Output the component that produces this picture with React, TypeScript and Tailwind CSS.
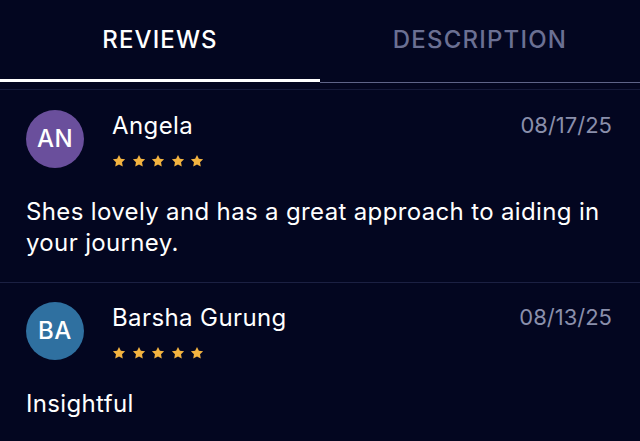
const REVIEWS = [
  {
    initials: 'AN',
    name: 'Angela',
    date: '08/17/25',
    color: 'bg-[#6a4f9c]',
    text: 'Shes lovely and has a great approach to aiding in your journey.',
  },
  {
    initials: 'BA',
    name: 'Barsha Gurung',
    date: '08/13/25',
    color: 'bg-[#2f70a0]',
    text: 'Insightful',
  },
]

function Star() {
  return (
    <svg width="14" height="14" viewBox="0 0 24 24" className="fill-[#f3b340]">
      <path d="M12 1.5l3.2 6.7 7.3 1-5.3 5.1 1.3 7.3L12 18.1l-6.5 3.5 1.3-7.3-5.3-5.1 7.3-1z" />
    </svg>
  )
}

function ReviewItem({ review, last }: { review: (typeof REVIEWS)[number]; last?: boolean }) {
  return (
    <div className={last ? 'pl-[26px] pr-[24px] pt-[19px]' : 'pl-[26px] pr-[24px] pt-[20px] pb-[24px] border-b border-[#1b2042]'}>
      <div className="flex items-start">
        {/* Avatar */}
        <div
          className={`w-[58px] h-[58px] rounded-full ${review.color} flex items-center justify-center shrink-0`}
        >
          <span className="text-white text-[24px] font-medium tracking-[0.5px]">{review.initials}</span>
        </div>

        {/* Name + rating */}
        <div className="ml-[28px] flex-1">
          <p className="text-white text-[24px] tracking-[0.4px] leading-[32px]">{review.name}</p>
          <div className="flex gap-[5.5px] mt-[12px]">
            {[0, 1, 2, 3, 4].map(i => (
              <Star key={i} />
            ))}
          </div>
        </div>

        <p className="text-[#8a8fab] text-[22px] leading-[32px] -mt-[1px] mr-[4px]">{review.date}</p>
      </div>

      <p className="text-white text-[24px] tracking-[0.35px] leading-[31px] mt-[28px]">{review.text}</p>
    </div>
  )
}

export default function App() {
  return (
    <div className="w-[640px] h-[441px] overflow-hidden bg-[#030620] font-['Inter',sans-serif]">
      {/* Tabs */}
      <div className="flex h-[79px]">
        <div className="w-1/2 flex items-center justify-center">
          <span className="text-white text-[24px] font-medium tracking-[1.1px]">REVIEWS</span>
        </div>
        <div className="w-1/2 flex items-center justify-center">
          <span className="text-[#6b7093] text-[24px] font-medium tracking-[1.2px]">DESCRIPTION</span>
        </div>
      </div>
      <div className="flex h-[4px]">
        <div className="w-1/2 h-[3px] bg-white" />
        <div className="w-1/2 border-b border-[#5f6488]" />
      </div>
      <div className="h-[6px]" />
      <div className="h-px bg-[#151a3a]" />

      {REVIEWS.map((r, i) => (
        <ReviewItem key={r.name} review={r} last={i === REVIEWS.length - 1} />
      ))}
    </div>
  )
}
